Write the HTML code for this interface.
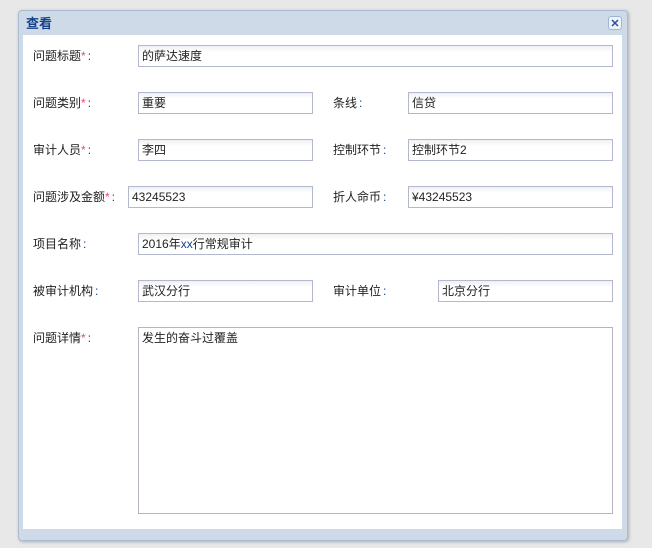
<!DOCTYPE html>
<html><head><meta charset="utf-8"><style>
*{margin:0;padding:0;box-sizing:border-box}
body{width:652px;height:548px;background:#e8e8e8;position:relative;overflow:hidden;font-family:"Liberation Sans","Noto Sans CJK SC","WenQuanYi Zen Hei",sans-serif;font-size:12px;color:#222}
.win{position:absolute;left:18px;top:10px;width:610px;height:531px;background:#cedae7;border:1px solid #a9bcd4;border-radius:4px;box-shadow:1px 1px 3px rgba(0,0,0,.25)}
.title{position:absolute;left:7px;top:2px;font-weight:bold;font-size:13px;color:#15428b}
.close{position:absolute;left:589px;top:5px;width:14px;height:14px;border:1px solid #9fb4d6;border-radius:3px;background:#eef3fa}
.body{position:absolute;left:23px;top:35px;width:599px;height:494px;background:#fff}
.l{position:absolute;line-height:14px}
.s{color:#f0447a}
.c{color:#15428b;margin-left:2px}
.i{position:absolute;height:22px;border:1px solid #b4b8cc;background:linear-gradient(#eef0f3,#fff 6px);padding:0 3px;line-height:20px}
</style></head><body>
<div class="win">
<div class="title">查看</div>
<div class="close"><svg width="12" height="12" viewBox="0 0 12 12" style="display:block"><path d="M3 3L9 9M9 3L3 9" stroke="#2a4f9a" stroke-width="1.5"/></svg></div>
</div>
<div class="body"></div>
<div class="l" style="left:33px;top:49px">问题标题<span class="s">*</span><span class="c">:</span></div>
<div class="i" style="left:138px;top:45px;width:475px">的萨达速度</div>

<div class="l" style="left:33px;top:96px">问题类别<span class="s">*</span><span class="c">:</span></div>
<div class="i" style="left:138px;top:92px;width:175px">重要</div>
<div class="l" style="left:333px;top:96px">条线<span class="c">:</span></div>
<div class="i" style="left:408px;top:92px;width:205px">信贷</div>

<div class="l" style="left:33px;top:143px">审计人员<span class="s">*</span><span class="c">:</span></div>
<div class="i" style="left:138px;top:139px;width:175px">李四</div>
<div class="l" style="left:333px;top:143px">控制环节<span class="c">:</span></div>
<div class="i" style="left:408px;top:139px;width:205px">控制环节2</div>

<div class="l" style="left:33px;top:190px">问题涉及金额<span class="s">*</span><span class="c">:</span></div>
<div class="i" style="left:128px;top:186px;width:185px">43245523</div>
<div class="l" style="left:333px;top:190px">折人命币<span class="c">:</span></div>
<div class="i" style="left:408px;top:186px;width:205px">¥43245523</div>

<div class="l" style="left:33px;top:237px">项目名称<span class="c">:</span></div>
<div class="i" style="left:138px;top:233px;width:475px">2016年<span style="color:#15428b">xx</span>行常规审计</div>

<div class="l" style="left:33px;top:284px">被审计机构<span class="c">:</span></div>
<div class="i" style="left:138px;top:280px;width:175px">武汉分行</div>
<div class="l" style="left:333px;top:284px">审计单位<span class="c">:</span></div>
<div class="i" style="left:438px;top:280px;width:175px">北京分行</div>

<div class="l" style="left:33px;top:331px">问题详情<span class="s">*</span><span class="c">:</span></div>
<div class="i" style="left:138px;top:327px;width:475px;height:187px;background:#fff;line-height:18px;padding-top:1px;border-color:#b4b4c4">发生的奋斗过覆盖</div>
</body></html>
